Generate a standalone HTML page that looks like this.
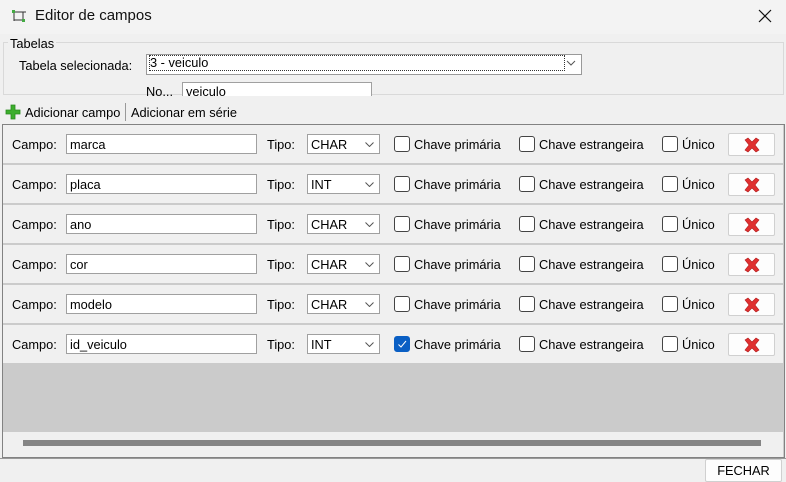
<!DOCTYPE html>
<html><head><meta charset="utf-8"><style>
*{box-sizing:border-box;margin:0;padding:0}
body{width:786px;height:482px;background:#f0f0f0;font-family:"Liberation Sans",sans-serif;font-size:12.8px;color:#000;position:relative;overflow:hidden}
.a{position:absolute;white-space:nowrap}
.inp{position:absolute;background:#fff;border:1px solid #a0a0a0;padding:3px 3px 1px;font-size:12.8px;line-height:14px}
.cb{position:absolute;width:16px;height:16px;border:1px solid #444;border-radius:3px;background:#fff}
.row{position:absolute;left:3px;width:780px;height:38px;background:#f0f0f0}
.sep{position:absolute;left:3px;width:780px;height:2px;background:#cbcbcb}
.btn{position:absolute;background:#fdfdfd;border:1px solid #d0d0d0;border-radius:2px}
</style></head><body>
<div class="a" style="left:0;top:0;width:786px;height:34px;background:#f3f3f3"></div>
<svg class="a" style="left:11px;top:9px" width="16" height="14" viewBox="0 0 16 14"><path d="M1 3H15M3 1V12M3 11H13M12 3V13" stroke="#333" stroke-width="1" fill="none"/><rect x="1" y="1" width="3" height="3" fill="#4a4"/><rect x="11" y="10" width="3" height="3" fill="#4a4"/></svg>
<div class="a" style="left:35px;top:7px;font-size:15px;line-height:17px;color:#111">Editor de campos</div>
<svg class="a" style="left:758px;top:9px" width="14" height="14"><path d="M1 1L13 13M13 1L1 13" stroke="#111" stroke-width="1.2"/></svg>
<div class="a" style="left:3px;top:42px;width:781px;height:53px;border:1px solid #d9d9d9"></div>
<div class="a" style="left:8px;top:36px;background:#f0f0f0;padding:0 2px">Tabelas</div>
<div class="a" style="left:19px;top:58px">Tabela selecionada:</div>
<div class="inp" style="left:146px;top:54px;width:436px;height:21px;border-color:#999;padding-top:1px"><span style="outline:1px dotted #333;display:inline-block;width:414px">3 - veiculo</span></div>
<svg class="a" style="left:566px;top:60px" width="10" height="6"><path d="M1 1L5 5L9 1" stroke="#555" fill="none"/></svg>
<div class="a" style="left:0;top:96px;width:786px;height:28px;background:#f0f0f0"></div>
<div class="a" style="left:146px;top:84px">No...</div>
<div class="a" style="left:182px;top:82px;width:190px;height:14px;background:#fff;border:1px solid #a0a0a0;border-bottom:none;overflow:hidden;padding:3px 0 0 3px;line-height:12px">veiculo</div>
<svg class="a" style="left:5px;top:104px" width="16" height="16"><path d="M6 1H10V6H15V10H10V15H6V10H1V6H6Z" fill="#3cae2c" stroke="#2a8a1e" stroke-width=".8"/></svg>
<div class="a" style="left:25px;top:105px">Adicionar campo</div>
<div class="a" style="left:125px;top:103px;width:1px;height:18px;background:#999"></div>
<div class="a" style="left:131px;top:105px">Adicionar em série</div>
<div class="a" style="left:2px;top:124px;width:783px;height:334px;border:1px solid #828282;background:#cbcbcb"></div>
<div class="a" style="left:3px;top:432px;width:780px;height:25px;background:#f0f0f0"></div>
<div class="a" style="left:23px;top:440px;width:738px;height:6px;background:#858585"></div>
<div id="rows"></div>
<div class="a" style="left:0;top:458px;width:786px;height:24px;border-top:1px solid #999;background:#f0f0f0"></div>
<div class="btn" style="left:705px;top:459px;width:77px;height:23px;text-align:center;line-height:21px">FECHAR</div>
<script>
var d=[["marca","CHAR"],["placa","INT"],["ano","CHAR"],["cor","CHAR"],["modelo","CHAR"],["id_veiculo","INT",1]];
var h="";
d.forEach(function(r,i){var t=125+40*i;
h+='<div class="row" style="top:'+t+'px"></div>';
if(i<5)h+='<div class="sep" style="top:'+(t+38)+'px"></div>';
var c=t+19;
h+='<div class="a" style="left:12px;top:'+(c-7)+'px">Campo:</div>';
h+='<div class="inp" style="left:66px;top:'+(c-10)+'px;width:191px;height:20px">'+r[0]+'</div>';
h+='<div class="a" style="left:267px;top:'+(c-7)+'px">Tipo:</div>';
h+='<div class="inp" style="left:307px;top:'+(c-10)+'px;width:73px;height:20px">'+r[1]+'</div>';
h+='<svg class="a" style="left:365px;top:'+(c-2)+'px" width="9" height="5"><path d="M.5 .5L4.5 4.5L8.5 .5" stroke="#555" fill="none"/></svg>';
if(r[2])h+='<div class="cb" style="left:394px;top:'+(c-8)+'px;background:#0a5fc4;border-color:#0a5fc4"><svg width="14" height="14" style="position:absolute;left:0;top:0"><path d="M3.5 7.5L6 10L11 4" stroke="#fff" fill="none" stroke-width="1"/></svg></div>';
else h+='<div class="cb" style="left:394px;top:'+(c-8)+'px"></div>';
h+='<div class="a" style="left:414px;top:'+(c-7)+'px">Chave primária</div>';
h+='<div class="cb" style="left:519px;top:'+(c-8)+'px"></div>';
h+='<div class="a" style="left:539px;top:'+(c-7)+'px">Chave estrangeira</div>';
h+='<div class="cb" style="left:662px;top:'+(c-8)+'px"></div>';
h+='<div class="a" style="left:682px;top:'+(c-7)+'px">Único</div>';
h+='<div class="btn" style="left:728px;top:'+(c-11)+'px;width:47px;height:23px"><svg width="18" height="16" style="position:absolute;left:14px;top:3px"><path d="M2 3L5 1L9 5L13 1L16 3L12 8L16 13L13 15L9 11L5 15L2 13L6 8Z" fill="#e03030" stroke="#b01818" stroke-width=".6"/></svg></div>';
});
document.getElementById("rows").outerHTML=h;
</script>
</body></html>
